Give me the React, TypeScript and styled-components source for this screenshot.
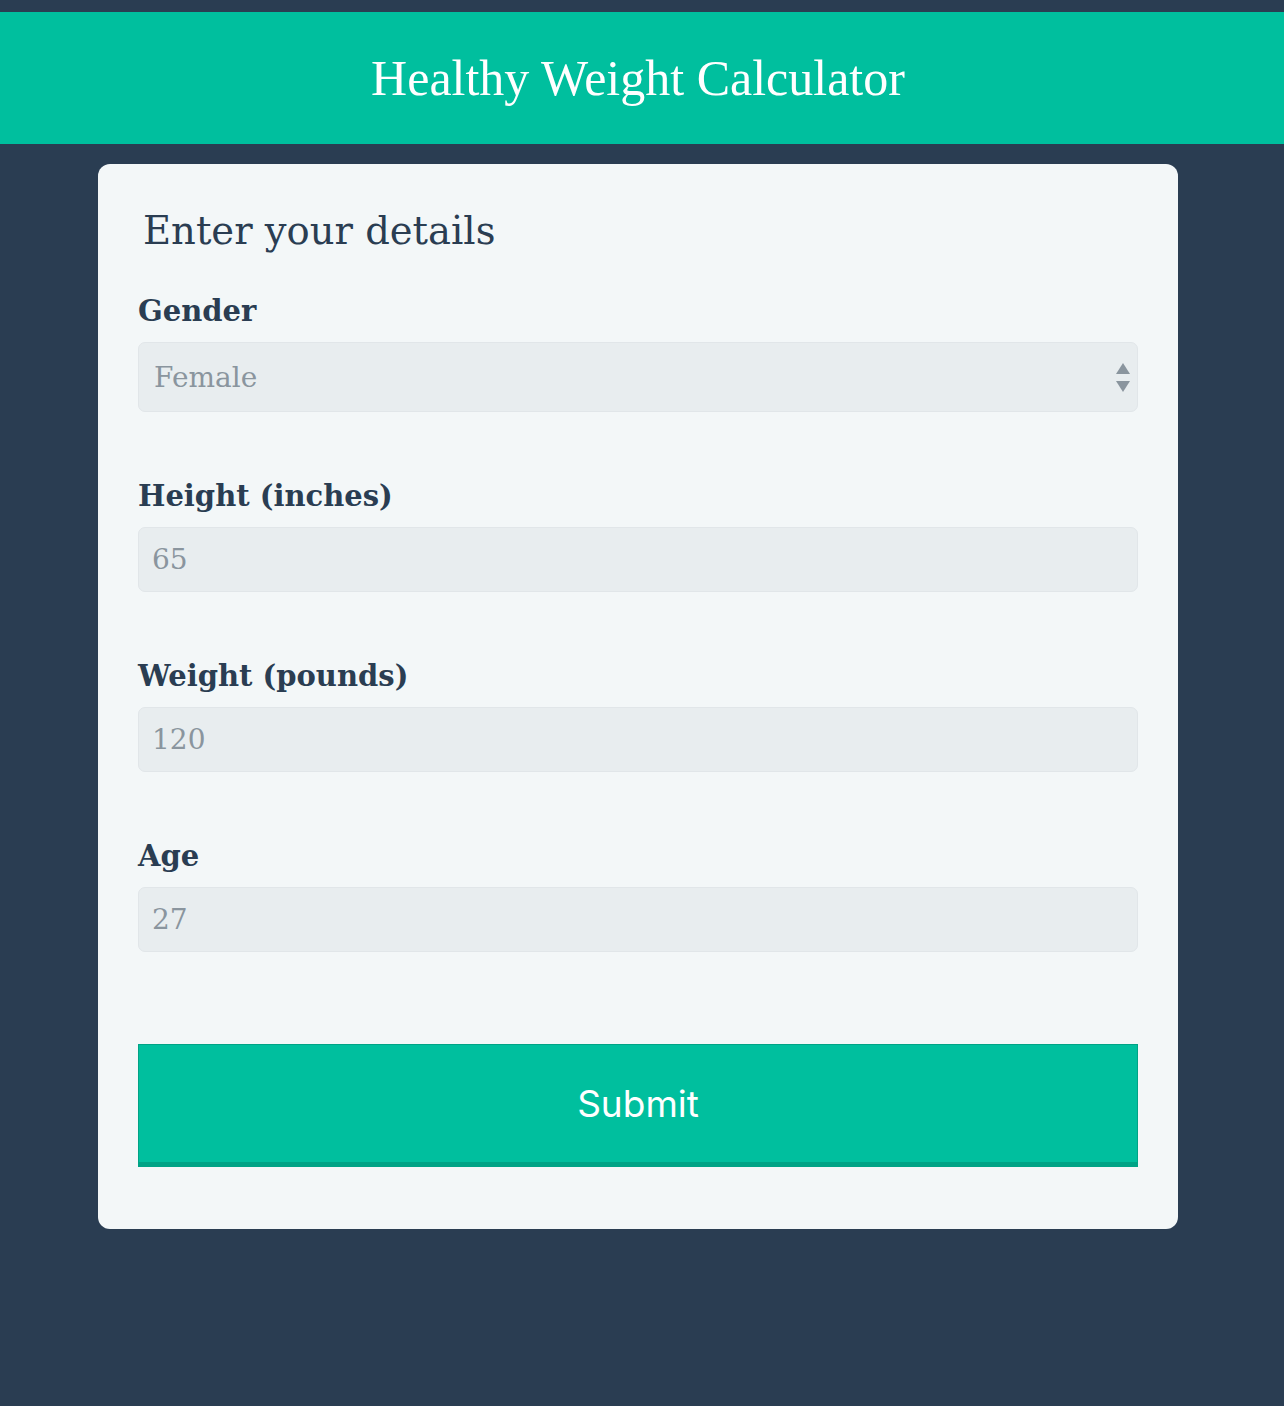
import React from 'react';
import styled, { createGlobalStyle } from 'styled-components';

const GlobalStyle = createGlobalStyle`
    html, body {
        margin: 0;
        padding: 0;
        background-color: #2a3d52;
    }
    body {
        min-height: 1406px;
        font-family: "DejaVu Serif", Georgia, serif;
    }
`;

const Page = styled.div`
    padding: 12px 8px 178px 0;
`;

const Header = styled.header`
    height: 132px;
    background-color: #00bf9e;
    display: flex;
    align-items: center;
    justify-content: center;
    margin-right: -8px;
    padding-right: 8px;
`;

const HeaderTitle = styled.h1`
    margin: 0;
    font-family: "Liberation Serif", "Times New Roman", serif;
    font-weight: normal;
    font-size: 50px;
    color: white;
`;

const Card = styled.form`
    width: 1080px;
    box-sizing: border-box;
    margin: 20px auto 0;
    padding: 40px 40px 62px;
    background-color: #f3f7f8;
    border-radius: 12px;
`;

const Title = styled.h2`
    margin: 0 0 33px;
    padding-left: 5px;
    font-weight: normal;
    font-size: 38.5px;
    line-height: 54px;
    color: #2a3d52;
`;

const Field = styled.div<{ $last?: boolean }>`
    margin-bottom: ${(p) => (p.$last ? '0' : '64px')};
`;

const Label = styled.label`
    display: block;
    margin-bottom: 11px;
    font-weight: bold;
    font-size: 29px;
    line-height: 40px;
    color: #2a3d52;
`;

const SelectWrap = styled.div`
    position: relative;
`;

const inputLook = `
    display: block;
    width: 100%;
    box-sizing: border-box;
    margin: 0;
    border: 1px solid #e1e6e9;
    border-radius: 7px;
    background-color: #e8edef;
    color: #8a959e;
    font-family: "DejaVu Serif", Georgia, serif;
    outline: none;
`;

const Select = styled.select`
    ${inputLook}
    height: 70px;
    padding: 0 50px 0 15px;
    font-size: 28px;
    appearance: none;
    -webkit-appearance: none;
`;

const Arrows = styled.svg`
    position: absolute;
    right: 8px;
    top: 21px;
    width: 14px;
    height: 30px;
    pointer-events: none;
`;

const Input = styled.input`
    ${inputLook}
    height: 65px;
    padding: 0 13px;
    font-size: 28px;
`;

const SubmitButton = styled.button`
    display: block;
    width: 100%;
    height: 123px;
    margin-top: 92px;
    box-sizing: border-box;
    border: 1px solid #00a386;
    border-bottom: 5px solid #00a386;
    background-color: #00bf9e;
    color: white;
    font-family: Inter, "Liberation Sans", sans-serif;
    font-size: 37px;
    cursor: pointer;
`;

const fields = [
    { label: 'Height (inches)', value: '65' },
    { label: 'Weight (pounds)', value: '120' },
    { label: 'Age', value: '27' },
];

export default function App() {
    return (
        <Page>
            <GlobalStyle />
            <Header>
                <HeaderTitle>Healthy Weight Calculator</HeaderTitle>
            </Header>
            <Card onSubmit={(e) => e.preventDefault()}>
                <Title>Enter your details</Title>
                <Field>
                    <Label>Gender</Label>
                    <SelectWrap>
                        <Select defaultValue="female">
                            <option value="female">Female</option>
                            <option value="male">Male</option>
                        </Select>
                        <Arrows viewBox="0 0 14 30">
                            <path d="M7 0 L14 11 L0 11 Z" fill="#8a959e" />
                            <path d="M0 18 L14 18 L7 29 Z" fill="#8a959e" />
                        </Arrows>
                    </SelectWrap>
                </Field>
                {fields.map((f, i) => (
                    <Field key={f.label} $last={i === fields.length - 1}>
                        <Label>{f.label}</Label>
                        <Input readOnly defaultValue={f.value} />
                    </Field>
                ))}
                <SubmitButton type="submit">Submit</SubmitButton>
            </Card>
        </Page>
    );
}
